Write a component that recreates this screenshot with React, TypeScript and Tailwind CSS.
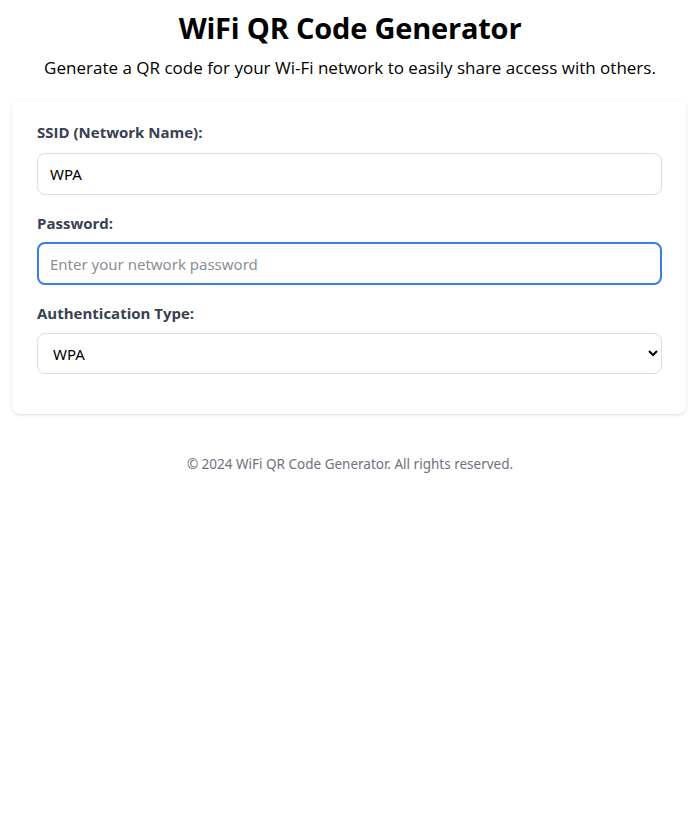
import { useState } from 'react';

export default function App() {
  const [ssid, setSsid] = useState('WPA');
  const [password, setPassword] = useState('');
  const [auth, setAuth] = useState('WPA');

  return (
    <div className="min-h-screen bg-white font-['Open_Sans',sans-serif] text-black">
      <header className="pt-[9px] text-center">
        <h1 className="text-[29px] font-bold leading-[38px] tracking-[-0.2px]">WiFi QR Code Generator</h1>
        <p className="mt-[9px] text-[17px] leading-[24px]">
          Generate a QR code for your Wi-Fi network to easily share access with others.
        </p>
      </header>

      <main className="mt-[20px] pl-3 pr-[14px]">
        <div className="rounded-lg bg-white pb-10 pl-[25px] pr-6 pt-[22px] shadow-[0_1px_3px_rgba(0,0,0,0.14)]">
          <label className="block text-[15px] font-bold leading-5 text-[#374151]">SSID (Network Name):</label>
          <input
            value={ssid}
            onChange={e => setSsid(e.target.value)}
            className="mt-[11px] block h-[42px] w-full rounded-lg border border-[#d8dde2] px-3 font-['Noto_Sans',sans-serif] text-[15px] text-black outline-none"
          />

          <label className="mt-[18px] block text-[15px] font-bold leading-5 text-[#374151]">Password:</label>
          <input
            type="password"
            value={password}
            onChange={e => setPassword(e.target.value)}
            placeholder="Enter your network password"
            className="mt-[9px] block h-[43px] w-full rounded-lg border-2 border-[#3a7de0] px-[11px] font-['Noto_Sans',sans-serif] text-[15px] text-black outline-none placeholder:text-[#8a8f96]"
          />

          <label className="mt-[18px] block text-[15px] font-bold leading-5 text-[#374151]">Authentication Type:</label>
          <select
            value={auth}
            onChange={e => setAuth(e.target.value)}
            className="mt-[10px] block h-[41px] w-full rounded-lg border border-[#d8dde2] bg-white pl-[11px] pr-3 font-['Noto_Sans',sans-serif] text-[15px] text-black outline-none"
          >
            <option value="WPA">WPA</option>
            <option value="WEP">WEP</option>
            <option value="nopass">None</option>
          </select>
        </div>
      </main>

      <footer className="mt-[40px] text-center font-['Noto_Sans',sans-serif] text-[13.5px] leading-5 text-[#6b7280]">
        © 2024 WiFi QR Code Generator. All rights reserved.
      </footer>
    </div>
  );
}
